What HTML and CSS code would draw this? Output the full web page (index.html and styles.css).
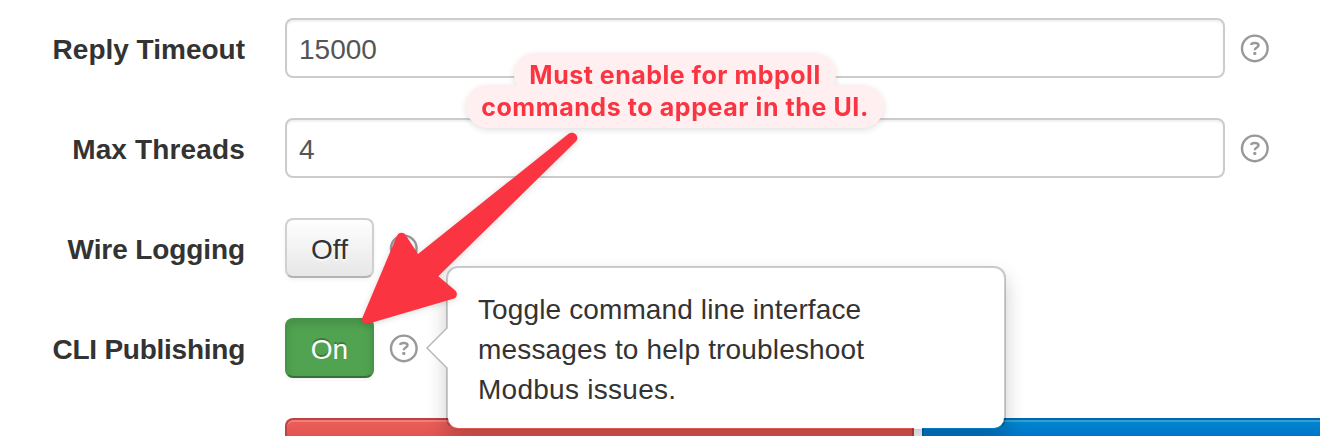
FILE: index.html
```
<!DOCTYPE html>
<html lang="en">
<head>
<meta charset="utf-8">
<title>Settings</title>
<link rel="stylesheet" href="styles.css">
</head>
<body>
<svg class="sprite" aria-hidden="true">
  <symbol id="help" viewBox="0 0 30 30">
    <circle cx="14.8" cy="15.4" r="12.8" fill="none" stroke="#999" stroke-width="2.4"/>
    <path d="M10.9 11.9C11.3 10.4 12.7 9.9 14.8 9.9C17.2 9.9 18.5 10.7 18.5 12.3C18.5 14.6 14.8 14.4 14.8 17.2" fill="none" stroke="#999" stroke-width="2.5"/>
    <rect x="13.2" y="18.9" width="3.2" height="3" rx="1.2" fill="#999"/>
  </symbol>
</svg>
<form class="form">
  <div class="row">
    <label class="label reply">Reply Timeout</label>
    <div class="input number">15000</div>
    <svg class="help"><use href="#help"/></svg>
  </div>
  <div class="row">
    <label class="label threads">Max Threads</label>
    <div class="input">4</div>
    <svg class="help"><use href="#help"/></svg>
  </div>
  <div class="row">
    <label class="label wire">Wire Logging</label>
    <button type="button" class="toggle">Off</button>
    <svg class="help"><use href="#help"/></svg>
  </div>
  <div class="row">
    <label class="label cli">CLI Publishing</label>
    <button type="button" class="toggle on">On</button>
    <svg class="help"><use href="#help"/></svg>
  </div>
  <div class="actions">
    <button type="button" class="action danger"></button>
    <button type="button" class="action primary"></button>
  </div>
</form>
<div class="popover">
  <svg class="pointer" viewBox="0 0 22 44"><path d="M22 0L1 22L22 44Z" fill="#fff"/><path d="M22 1L1 22L22 43" fill="none" stroke="#b5b5b5" stroke-width="1.4"/></svg>
  <div class="p1">Toggle command line interface</div>
  <div class="p2">messages to help troubleshoot</div>
  <div class="p3">Modbus issues.</div>
</div>
<svg class="arrow" viewBox="0 0 1320 436">
  <path d="M568.3 134C573.5 130 580.5 136.5 575.8 141.5L438.3 276.3L455 290.2C458.3 293 457 298 453.3 298.8L368 323.8C364 325 360.5 321.5 362.5 317.6L396.8 236.2C398.5 232 403.5 231.8 405.8 235.2L418 254Z" fill="#fb3442"/>
</svg>
<div class="note">
  <div class="pill first"><span>Must enable for mbpoll</span></div>
  <div class="pill second"><span>commands to appear in the UI.</span></div>
</div>
</body>
</html>
```
FILE: styles.css
```
body {
  margin: 0;
  width: 1320px;
  height: 436px;
  position: relative;
  overflow: hidden;
  background: #fff;
  color: #333;
  font: 28px/40px "Liberation Sans", Arial, sans-serif;
}
.sprite { position: absolute; width: 0; height: 0; }
.form { padding-top: 18px; }
.row {
  display: flex;
  align-items: center;
  height: 60px;
  margin-bottom: 40px;
}
.label {
  width: 245px;
  margin-right: 40px;
  text-align: right;
  font-weight: bold;
  white-space: nowrap;
  padding-top: 3px;
}
.threads { letter-spacing: .15px; }
.wire { letter-spacing: -.1px; }
.cli { letter-spacing: -.25px; }
.input {
  box-sizing: border-box;
  width: 940px;
  height: 60px;
  padding: 10px 12px 6px;
  border: 2px solid #ccc;
  border-radius: 8px;
  box-shadow: inset 0 2px 2px rgba(0, 0, 0, .06);
  color: #555;
}
.help { width: 30px; height: 30px; margin-left: 15px; }
.toggle {
  box-sizing: border-box;
  width: 89px;
  height: 60px;
  padding: 3px 0 0;
  border: 2px solid #d0d0d0;
  border-bottom-color: #b3b3b3;
  border-radius: 8px;
  background: linear-gradient(#fff, #e6e6e6) border-box;
  box-shadow: inset 0 2px 0 rgba(255, 255, 255, .2), 0 2px 4px rgba(0, 0, 0, .05);
  color: #333;
  font: 28px/40px "Liberation Sans", Arial, sans-serif;
  text-shadow: 0 2px 2px rgba(255, 255, 255, .75);
}
.toggle.on {
  border-color: #479348 #479348 #387038;
  background: #51a351;
  box-shadow: inset 0 4px 8px rgba(0, 0, 0, .12), 0 2px 4px rgba(0, 0, 0, .05);
  color: #fff;
  text-shadow: 0 -2px 0 rgba(0, 0, 0, .25);
}
.actions { display: flex; gap: 8px; padding-left: 285px; }
.action {
  box-sizing: border-box;
  height: 18px;
  border: 2px solid;
  border-bottom: 0;
  border-radius: 8px 8px 0 0;
  box-shadow: inset 0 2px 0 rgba(255, 255, 255, .2);
}
.danger {
  flex: none;
  width: 629px;
  border-color: #b94440;
  background: linear-gradient(#ee5f5b, #bd362f) 0 0 / 100% 60px;
}
.primary {
  flex: 1;
  border-right: 0;
  border-top-right-radius: 0;
  border-color: #0067b0;
  background: linear-gradient(#0088cc, #0044cc) 0 0 / 100% 60px;
}

.popover {
  position: absolute;
  left: 446px;
  top: 266px;
  box-sizing: border-box;
  width: 560px;
  height: 164px;
  padding: 22px 30px 18px;
  border: 2px solid rgba(0, 0, 0, .2);
  border-bottom-color: rgba(0, 0, 0, .03);
  border-radius: 12px;
  background: #fff;
  background-clip: padding-box;
  box-shadow: 0 10px 20px rgba(0, 0, 0, .2);
  white-space: nowrap;
}
.p1 { letter-spacing: .12px; }
.p2 { letter-spacing: .17px; }
.p3 { letter-spacing: .27px; }
.pointer { position: absolute; left: -22px; top: 58px; width: 22px; height: 44px; }
.arrow {
  position: absolute;
  left: 0;
  top: 0;
  width: 1320px;
  height: 436px;
  filter: drop-shadow(0 1px 3px rgba(0, 0, 0, .15));
}
.note {
  position: absolute;
  left: 466px;
  top: 53px;
  width: 418px;
  display: flex;
  flex-direction: column;
  align-items: center;
  color: #fb3442;
  font: 700 25px/44px Inter, sans-serif;
  white-space: nowrap;
  filter: drop-shadow(0 2px 3px rgba(0, 0, 0, .12));
}
.pill {
  display: flex;
  justify-content: center;
  height: 43px;
  border-radius: 22px;
  background: #ffeff0;
}
.pill span { position: relative; z-index: 1; }
.first { width: 322px; letter-spacing: .5px; }
.second { width: 418px; margin-top: -11px; letter-spacing: .58px; }
```
